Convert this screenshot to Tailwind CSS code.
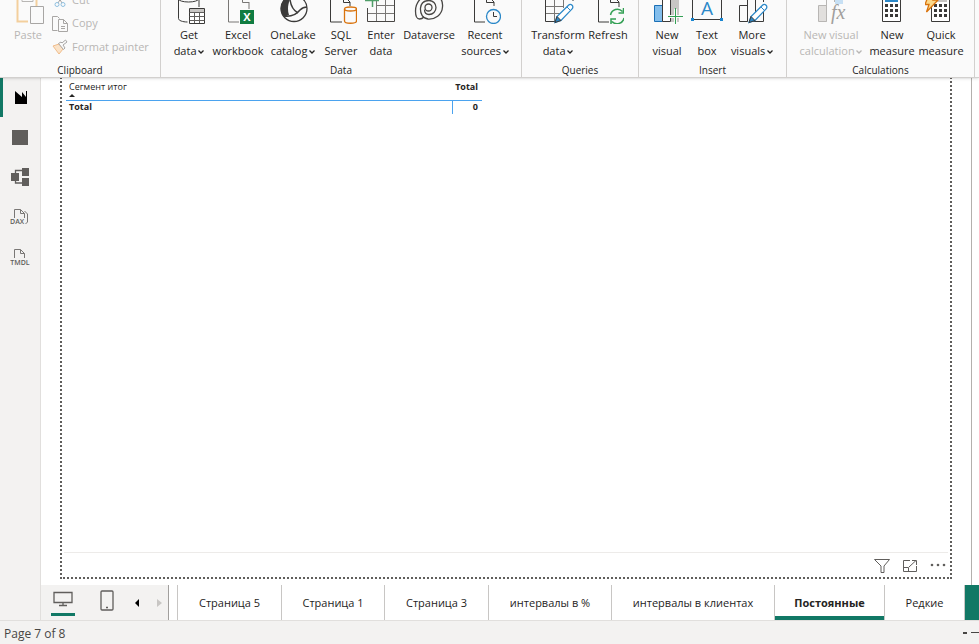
<!DOCTYPE html>
<html lang="en" class="h-full">
  <head>
    <meta charset="UTF-8" />
    <meta name="viewport" content="width=device-width, initial-scale=1.0" />
    <title>Power BI report</title>
    <script src="https://cdn.jsdelivr.net/npm/@tailwindcss/browser@4"></script>
  </head>
  <body class="flex h-screen flex-col overflow-hidden bg-white font-['Open_Sans','Noto_Sans',sans-serif] text-[11px] text-[#252423]">
    <!-- shared shapes -->
    <svg class="hidden">
      <symbol id="pencil" viewBox="0 0 20 20">
        <path d="M1 19l2-6L14.500 1.800a2.400 2.400 0 0 1 3.600 3.600L7 17z" fill="#fff" stroke="#2b88c8" stroke-width="1.300" />
        <path d="M1 19l2-6 4 4z" fill="#2b88c8" />
        <path d="M13 3.500l3.500 3.500" stroke="#2b88c8" />
      </symbol>
      <symbol id="chevron" viewBox="0 0 6 6">
        <path d="M.5 1.500L3 4l2.500-2.500" fill="none" stroke="currentColor" stroke-width="1.300" />
      </symbol>
    </svg>

    <!-- ribbon -->
    <header class="relative z-10 flex shrink-0 overflow-hidden border-b border-[#d2d0ce] bg-[#fafafa] shadow-sm">
      <section class="-mt-2 flex w-[161px] shrink-0 flex-col border-r border-[#d2d0ce]">
        <div class="flex h-[67px] text-[#b8b6b4]">
          <button disabled class="flex w-12 flex-col items-center gap-[3px] pl-2 leading-4">
            <svg class="ml-1 size-8" viewBox="0 0 32 32" fill="none">
              <path d="M14 29.500H3.500V2h19v12" stroke="#f3cf9d" stroke-width="2" />
              <path d="M8 9.500h11V4H8z" fill="#fafafa" stroke="#b8b6b4" />
              <path d="M16.500 14.500h13v17h-13z" fill="#fafafa" stroke="#a8a6a4" />
            </svg>
            <span>Paste</span>
          </button>
          <div class="-mt-1 flex flex-col pl-1">
            <button disabled class="flex h-6 items-center gap-1">
              <svg class="size-4" viewBox="0 0 16 16" fill="none">
                <path d="M4 1l6 10M12 1L6 11" stroke="#a8a6a4" />
                <circle cx="5" cy="12.500" r="2" stroke="#8fc0e0" />
                <circle cx="11" cy="12.500" r="2" stroke="#8fc0e0" />
              </svg>
              <span>Cut</span>
            </button>
            <button disabled class="flex h-6 items-center gap-1">
              <svg class="size-4" viewBox="0 0 16 16" fill="none" stroke="#a8a6a4">
                <path d="M5.500 14.500h-5V.5h5l2 2" />
                <path d="M6.500 3.500h5l4 4v8h-9zM11.500 3.500v4h4M9 10.500h4M9 12.500h4" />
              </svg>
              <span>Copy</span>
            </button>
            <button disabled class="flex h-6 items-center gap-1">
              <svg class="size-4" viewBox="0 0 16 16" fill="none">
                <path d="M1 7l6-2 4 5-4 5z" fill="#fbe3c8" stroke="#f0bd8c" />
                <path d="M6.500 4.500l5 6 1.500-1.500-2-3 4-3-1.500-2-3.500 3-1-1z" fill="#fafafa" stroke="#a8a6a4" />
              </svg>
              <span>Format painter</span>
            </button>
          </div>
        </div>
        <h2 class="mt-1 text-center text-[10px] leading-[14px]">Clipboard</h2>
      </section>

      <section class="-mt-2 flex shrink-0 flex-col border-r border-[#d2d0ce]">
        <div class="flex h-[67px] pr-[6px] pl-1 leading-4 whitespace-nowrap">
          <button class="flex w-12 flex-col items-center gap-[3px]">
            <svg class="size-8 shrink-0" viewBox="0 0 32 32" fill="none" stroke="#3b3a39">
              <path d="M5.500 7v19.500c0 2 4 3.500 9 3.500M26 7v8" />
              <ellipse cx="15.500" cy="7" rx="10" ry="3" />
              <path d="M16.500 16.500h15v15h-15z" fill="#fff" />
              <path d="M17 17h14v3H17z" fill="#c8c6c4" stroke="none" />
              <path d="M16.500 20.500h15M16.500 24.500h15M16.500 28.500h15M21.500 20v11M26.500 20v11" stroke="#605e5c" />
            </svg>
            <span>Get<br />data <svg class="-ml-px inline size-[6px]"><use href="#chevron" /></svg></span>
          </button>
          <button class="flex w-[50px] flex-col items-center gap-[3px]">
            <svg class="size-8 shrink-0" viewBox="0 0 32 32" fill="none" stroke="#797775">
              <path d="M17 30H6.500V1M20.500 1v9.500H27M27 10v7" />
              <path d="M18 18h14v14H18z" fill="#107c41" stroke="none" />
              <text x="25" y="29" text-anchor="middle" font-size="11" font-weight="700" fill="#fff" stroke="none">X</text>
            </svg>
            <span>Excel<br />workbook</span>
          </button>
          <button class="flex w-[60px] flex-col items-center gap-[3px]">
            <svg class="size-8 shrink-0" viewBox="0 0 32 32" fill="none">
              <circle cx="17" cy="16.500" r="13" stroke="#3b3a39" stroke-width="1.300" />
              <path d="M13 4A13 13 0 0 0 7 25l5-2C10 17 11 10 15 3.500z" fill="#3b3a39" />
              <path d="M7 24c7 1 12-1 16-6 2-2 4-3 7-3M13 8c1 6 4 11 8 13" stroke="#3b3a39" stroke-width="1.500" />
            </svg>
            <span>OneLake<br />catalog <svg class="-ml-px inline size-[6px]"><use href="#chevron" /></svg></span>
          </button>
          <button class="flex w-9 flex-col items-center gap-[3px]">
            <svg class="size-8 shrink-0" viewBox="0 0 32 32" fill="none" stroke="#3b3a39">
              <path d="M17 30H5.500V1M18.500 1v9.500H25M20 5l5 5v4" />
              <path d="M19.500 17v12c0 3 12 3 12 0V17" stroke="#d9730d" stroke-width="1.300" />
              <ellipse cx="25.500" cy="17" rx="6" ry="2" stroke="#d9730d" stroke-width="1.300" />
            </svg>
            <span>SQL<br />Server</span>
          </button>
          <button class="flex w-11 flex-col items-center gap-[3px]">
            <svg class="size-8 shrink-0" viewBox="0 0 32 32" fill="none" stroke="#484644">
              <path d="M11.500 5v24M20.500 5v24M11 13.500h18M3 21.500h26" stroke="#797775" />
              <path d="M2.500 16v13.500h27V4" />
              <path d="M0 8.500h14M7.500 2v13" stroke="#4f9e68" stroke-width="1.500" />
            </svg>
            <span>Enter<br />data</span>
          </button>
          <button class="flex w-[52px] flex-col items-center gap-[3px]">
            <svg class="size-8 shrink-0" viewBox="0 0 32 32" fill="none" stroke="#484644" stroke-width="1.300">
              <circle cx="15.500" cy="15.500" r="3.500" />
              <path d="M22 3c6 2 8 7 7.500 12C29 23 22 27.500 15 27c-5-.5-8-5-7.500-11C8 11 11.500 8.500 16 8.500c4 0 7 3 7 7s-3 7-7 7c-3 0-4.500-2-4.500-5" />
              <path d="M18 2C9 3 2.500 10 2.500 19c0 5 1 8 4 8 2.500 0 3.500-1 4.500-2" />
            </svg>
            <span>Dataverse</span>
          </button>
          <button class="flex w-[60px] flex-col items-center gap-[3px]">
            <svg class="size-8 shrink-0" viewBox="0 0 32 32" fill="none" stroke="#3b3a39">
              <path d="M16 30H5.500V1M17.500 1v9.500H25M20 5l5 5v4" />
              <circle cx="24.500" cy="24.500" r="7" stroke="#2b88c8" stroke-width="1.300" />
              <path d="M24.500 20v4.500H28" />
            </svg>
            <span>Recent<br />sources <svg class="-ml-px inline size-[6px]"><use href="#chevron" /></svg></span>
          </button>
        </div>
        <h2 class="mt-1 text-center text-[10px] leading-[14px]">Data</h2>
      </section>

      <section class="-mt-2 flex shrink-0 flex-col border-r border-[#d2d0ce]">
        <div class="flex h-[67px] pr-[10px] pl-[6px] leading-4 whitespace-nowrap">
          <button class="flex w-15 flex-col items-center gap-[3px]">
            <svg class="size-8 shrink-0" viewBox="0 0 32 32" fill="none" stroke="#3b3a39">
              <path d="M12.500 4v25M21.500 4v12M4 14.500h18M4 21.500h14" stroke="#797775" />
              <path d="M3.500 4v25.500H13M31 4v5" />
              <use href="#pencil" x="12" y="11" width="20" height="21" />
            </svg>
            <span>Transform<br />data <svg class="-ml-px inline size-[6px]"><use href="#chevron" /></svg></span>
          </button>
          <button class="flex w-10 flex-col items-center gap-[3px]">
            <svg class="size-8 shrink-0" viewBox="0 0 32 32" fill="none" stroke="#3b3a39">
              <path d="M17 30H6.500V1M18.500 1v9.500H27M22 5l5 5v5" />
              <path d="M18.500 23a7 7 0 0 1 12-3.500M31.500 16v5h-5M32 26a7 7 0 0 1-12 3.500M19 32v-5h5" stroke="#33a054" stroke-width="1.500" />
            </svg>
            <span>Refresh</span>
          </button>
        </div>
        <h2 class="mt-1 text-center text-[10px] leading-[14px]">Queries</h2>
      </section>

      <section class="-mt-2 flex shrink-0 flex-col border-r border-[#d2d0ce]">
        <div class="flex h-[67px] pr-[7px] pl-[6px] leading-4 whitespace-nowrap">
          <button class="flex w-11 flex-col items-center gap-[3px]">
            <svg class="size-8 shrink-0" viewBox="0 0 32 32" fill="none">
              <path d="M3.500 13.500h8v16h-8z" fill="#83beec" stroke="#1a6fb5" />
              <path d="M11.500 2v27.500h8V2" fill="#fff" stroke="#3b3a39" />
              <path d="M20 2h8v28h-8z" fill="#c8c6c4" />
              <path d="M17 24.500h15M24.500 17v15" stroke="#fafafa" stroke-width="3" />
              <path d="M17 24.500h15M24.500 16v16" stroke="#33a054" />
            </svg>
            <span>New<br />visual</span>
          </button>
          <button class="flex w-9 flex-col items-center gap-[3px]">
            <svg class="size-8 shrink-0" viewBox="0 0 32 32" fill="none">
              <path d="M1.500 2v25.500h29V2" stroke="#3b3a39" />
              <path d="M0 26h3v3H0zM29 26h3v3h-3z" fill="#1a86d0" />
              <text x="16" y="23" text-anchor="middle" font-size="19" fill="#2b88c8">A</text>
            </svg>
            <span>Text<br />box</span>
          </button>
          <button class="flex w-[54px] flex-col items-center gap-[3px]">
            <svg class="size-8 shrink-0" viewBox="0 0 32 32" fill="none" stroke="#3b3a39">
              <path d="M11.500 13.500h-8v16h8zM11.500 2v27.500M19.500 2v20M27.500 2v8M27.500 20v9.500H17" />
              <use href="#pencil" x="12" y="11" width="20" height="21" />
            </svg>
            <span>More<br />visuals <svg class="-ml-px inline size-[6px]"><use href="#chevron" /></svg></span>
          </button>
        </div>
        <h2 class="mt-1 text-center text-[10px] leading-[14px]">Insert</h2>
      </section>

      <section class="-mt-2 flex shrink-0 flex-col border-r border-[#d2d0ce]">
        <div class="flex h-[67px] pr-2 pl-[7px] leading-4 whitespace-nowrap">
          <button disabled class="flex w-[74px] flex-col items-center gap-[3px] text-[#b8b6b4]">
            <svg class="size-8 shrink-0" viewBox="0 0 32 32" fill="none" stroke="#b8b6b4">
              <path d="M3.500 13.500h8v16h-8z" fill="#e1dfdd" />
              <path d="M11.500 2v27.500M19.500 2v8" />
              <path d="M20 2h8v10h-8z" fill="#c7e0f4" stroke="none" />
              <text x="16" y="27" font-family="Liberation Serif, serif" font-style="italic" font-size="20" fill="#a19f9d" stroke="none">fx</text>
            </svg>
            <span>New visual<br />calculation <svg class="-ml-px inline size-[6px]"><use href="#chevron" /></svg></span>
          </button>
          <button class="flex w-12 flex-col items-center gap-[3px]">
            <svg class="size-8 shrink-0" viewBox="0 0 32 32" fill="none">
              <path d="M6.500 2v27.500h18V2" fill="#fff" stroke="#3b3a39" />
              <path d="M9 4h13v6H9z" fill="#2b88c8" />
              <path d="M9 13.500h13M9 18.500h13M9 23.500h13" stroke="#3b3a39" stroke-width="3" stroke-dasharray="3 2" />
            </svg>
            <span>New<br />measure</span>
          </button>
          <button class="flex w-[50px] flex-col items-center gap-[3px]">
            <svg class="size-8 shrink-0" viewBox="0 0 32 32" fill="none">
              <path d="M6.500 2v27.500h18V2" fill="#fff" stroke="#3b3a39" />
              <path d="M9 4h13v6H9z" fill="#c8c6c4" />
              <path d="M9 13.500h13M9 18.500h13M9 23.500h13" stroke="#3b3a39" stroke-width="3" stroke-dasharray="3 2" />
              <path d="M4 2h6L8 8h5L1.500 20 4 12.500H0z" fill="#fcd889" stroke="#d9730d" stroke-width="1.300" />
            </svg>
            <span>Quick<br />measure</span>
          </button>
        </div>
        <h2 class="mt-1 text-center text-[10px] leading-[14px]">Calculations</h2>
      </section>
    </header>

    <div class="flex min-h-0 flex-1">
      <!-- view switcher -->
      <nav class="-mt-px flex w-[41px] shrink-0 flex-col border-r border-[#e1dfdd] bg-[#f3f2f1]" aria-label="Views">
        <button aria-label="Report view" class="flex h-10 items-center justify-center border-l-3 border-[#117865] pr-px">
          <svg class="size-4" viewBox="0 0 16 16"><path d="M2 2l7 6V3l4 5V2h1v13H2z" fill="#000" /></svg>
        </button>
        <button aria-label="Table view" class="flex h-10 items-center justify-center">
          <svg class="h-[15px] w-4" viewBox="0 0 16 15"><path d="M0 0h16v15H0z" fill="#605e5c" /></svg>
        </button>
        <button aria-label="Model view" class="flex h-10 items-center justify-center">
          <svg class="size-[18px]" viewBox="0 0 18 18">
            <path d="M0 5h8v8H0zM11 0h7v8h-7zM11 10h7v8h-7z" fill="#605e5c" />
            <path d="M4.500 5V2.500H11M4.500 13v2H11" fill="none" stroke="#605e5c" stroke-width="1.300" />
          </svg>
        </button>
        <button aria-label="DAX query view" class="flex h-10 items-center justify-center">
          <svg class="h-[18px] w-5" viewBox="0 0 20 18" fill="none" stroke="#797775">
            <path d="M4.500 10V1.500h6l4 4V10M10.500 1.500v4h4M14.500 3l3 3v8l-2 2" />
            <text x="0" y="16" font-size="7" font-weight="600" fill="#605e5c" stroke="none">DAX</text>
          </svg>
        </button>
        <button aria-label="TMDL view" class="flex h-10 items-center justify-center">
          <svg class="h-[18px] w-5" viewBox="0 0 20 18" fill="none" stroke="#797775">
            <path d="M4.500 10V1.500h6l4 4V10M10.500 1.500v4h4" />
            <text x="10" y="17" text-anchor="middle" font-size="7" font-weight="600" fill="#605e5c" stroke="none">TMDL</text>
          </svg>
        </button>
      </nav>

      <div class="flex min-w-0 flex-1 flex-col">
        <!-- report canvas -->
        <main class="flex min-h-0 flex-1 pr-[7px] pb-[6px] pl-[19px]">
          <div class="-mt-2 -mb-[6px] flex min-w-0 flex-1 border-r border-[#b3b0ad] pr-[19px] pb-[6px]">
            <article class="flex min-w-0 flex-1 flex-col border-2 border-dotted border-[#605e5c] pt-2">
              <div class="flex-1 pl-1">
                <table class="w-[416px] border-collapse text-[9px] leading-3">
                  <thead>
                    <tr class="border-b border-[#4ba3ef]">
                      <th class="h-5 pl-[3px] text-left align-top font-normal">
                        <span class="block pt-px leading-3">Сегмент итог</span>
                        <svg class="mt-px h-[3px] w-[6px]" viewBox="0 0 6 3"><path d="M0 3l3-3 3 3z" fill="#252423" /></svg>
                      </th>
                      <th class="w-[30px] pt-px pr-1 text-right align-top leading-3 font-bold">Total</th>
                    </tr>
                  </thead>
                  <tbody>
                    <tr class="font-bold">
                      <td class="h-[14px] pl-[3px]">Total</td>
                      <td class="border-l border-[#4ba3ef] pr-1 text-right">0</td>
                    </tr>
                  </tbody>
                </table>
              </div>
              <div class="mx-[2px] flex h-[25px] items-center justify-end gap-3 border-t border-[#edebe9] pr-[2px] pt-[2px] text-[#605e5c]">
                <button aria-label="Filters">
                  <svg class="size-4" viewBox="0 0 16 16" fill="none" stroke="currentColor"><path d="M.5 1.500h15L10 8v6.500H7V8z" /></svg>
                </button>
                <button aria-label="Focus mode">
                  <svg class="size-4" viewBox="0 0 16 16" fill="none" stroke="currentColor"><path d="M8 2.500H1.500v11h13V8M1.500 9.500h5v4M7 9l7-6.500M10 2.500h4.500V7" /></svg>
                </button>
                <button aria-label="More options">
                  <svg class="size-4" viewBox="0 0 16 16" fill="currentColor"><circle cx="2" cy="7" r="1.300" /><circle cx="8" cy="7" r="1.300" /><circle cx="14" cy="7" r="1.300" /></svg>
                </button>
              </div>
            </article>
          </div>
        </main>

        <!-- page tabs -->
        <div class="flex h-[35px] shrink-0">
          <div class="flex w-32 shrink-0 border-r border-[#a19f9d] bg-[#f3f2f1] pl-[10px]">
            <button aria-label="Desktop layout" class="mb-1 flex w-6 flex-col items-center justify-end border-b-3 border-[#117865] pb-[6px]">
              <svg class="h-4 w-5" viewBox="0 0 20 16" fill="none" stroke="#605e5c" stroke-width="1.300"><path d="M1 1.500h18v10H1zM10 12v2.500M6 14.500h8" /></svg>
            </button>
            <button aria-label="Mobile layout" class="flex w-16 items-center justify-center pb-[5px]">
              <svg class="h-[21px] w-[14px]" viewBox="0 0 14 21" fill="none" stroke="#605e5c" stroke-width="1.300"><rect x="1" y="1" width="12" height="19" rx="1" /><path d="M6 17.500h2" /></svg>
            </button>
            <button aria-label="Previous page" class="-ml-1 w-2"><svg class="h-2 w-1" viewBox="0 0 4 8"><path d="M4 0v8L0 4z" fill="#000" /></svg></button>
            <button aria-label="Next page" disabled class="ml-[14px] w-2"><svg class="h-2 w-[5px]" viewBox="0 0 5 8"><path d="M0 0v8l5-4z" fill="#c8c6c4" /></svg></button>
          </div>
          <div class="ml-2 flex min-w-0 flex-1 overflow-hidden whitespace-nowrap" role="tablist">
            <button role="tab" class="w-[104px] shrink-0 border-l border-[#c8c6c4] pt-[2px]">Страница 5</button>
            <button role="tab" class="w-[103px] shrink-0 border-l border-[#c8c6c4] pt-[2px]">Страница 1</button>
            <button role="tab" class="w-[104px] shrink-0 border-l border-[#c8c6c4] pt-[2px]">Страница 3</button>
            <button role="tab" class="w-[123px] shrink-0 border-l border-[#c8c6c4] pt-[2px]">интервалы в %</button>
            <button role="tab" class="w-[163px] shrink-0 border-l border-[#c8c6c4] pt-[2px]">интервалы в клиентах</button>
            <button role="tab" aria-selected="true" class="w-[110px] shrink-0 border-l border-[#c8c6c4] pt-[2px] font-bold shadow-[inset_0_-4px_#117865]">Постоянные</button>
            <button role="tab" class="w-20 shrink-0 border-l border-[#c8c6c4] pt-[2px]">Редкие</button>
            <button aria-label="New page" class="flex-1 border-l border-[#c8c6c4] bg-[#117865]"></button>
          </div>
        </div>
      </div>
    </div>

    <!-- status bar -->
    <footer class="flex h-6 shrink-0 items-center border-t border-[#e1dfdd] bg-[#f3f2f1] pl-1 text-xs text-[#484644]">
      <span class="pt-[2px]">Page 7 of 8</span>
      <button aria-label="Zoom out" class="ml-auto h-[2px] w-1 bg-[#484644]"></button>
      <input type="range" aria-label="Zoom" class="ml-1 h-px w-2 appearance-none bg-[#484644] [&::-webkit-slider-thumb]:appearance-none" />
    </footer>
  </body>
</html>
